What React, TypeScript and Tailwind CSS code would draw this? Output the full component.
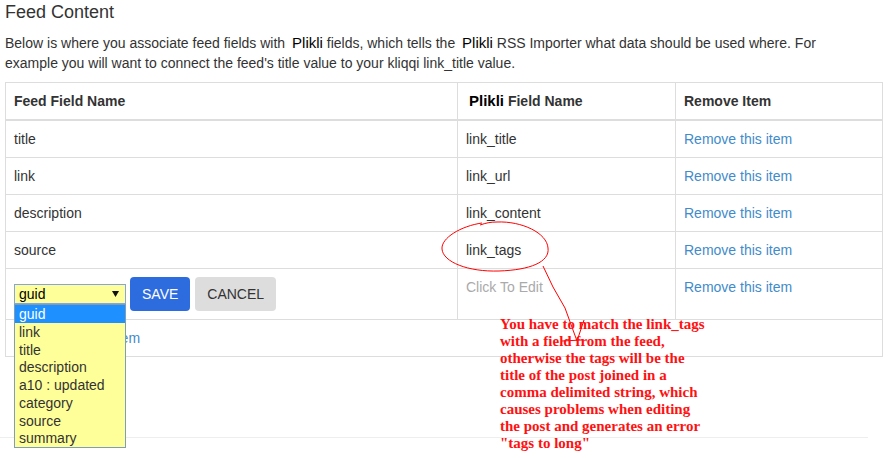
import React from 'react';

const rows = [
  { feed: 'title', field: 'link_title' },
  { feed: 'link', field: 'link_url' },
  { feed: 'description', field: 'link_content' },
  { feed: 'source', field: 'link_tags' },
];

const options = ['guid', 'link', 'title', 'description', 'a10 : updated', 'category', 'source', 'summary'];

const note = [
  'You have to match the link_tags',
  'with a field from the feed,',
  'otherwise the tags will be the',
  'title of the post joined in a',
  'comma delimited string, which',
  'causes problems when editing',
  'the post and generates an error',
  '"tags to long"',
];

function Brand({ bold }: { bold?: boolean }) {
  return (
    <span className={`ml-[3px] text-[15px] text-black ${bold ? 'font-bold' : ''}`}>Plikli</span>
  );
}

export default function App() {
  return (
    <div className="relative w-[889px] h-[458px] overflow-hidden bg-white font-['Liberation_Sans',Arial,sans-serif] text-[14px] leading-[20px] text-[#333]">
      <div className="pl-[5px] pt-[2px]">
        <h4 className="text-[18px] leading-[20px] font-normal mb-[11px]">Feed Content</h4>
        <p className="mb-[9px]">
          Below is where you associate feed fields with <Brand /> fields, which tells the <Brand /> RSS Importer what
          data should be used where. For
          <br />
          example you will want to connect the feed's title value to your kliqqi link_title value.
        </p>

        <table className="table-fixed border-collapse w-[877px] border border-[#ddd]">
          <colgroup>
            <col className="w-[452px]" />
            <col className="w-[218px]" />
            <col className="w-[207px]" />
          </colgroup>
          <thead>
            <tr>
              <th className="p-2 text-left align-bottom font-bold border border-[#ddd] border-b-2">Feed Field Name</th>
              <th className="p-2 text-left align-bottom font-bold border border-[#ddd] border-b-2">
                <Brand bold /> Field Name
              </th>
              <th className="p-2 text-left align-bottom font-bold border border-[#ddd] border-b-2">Remove Item</th>
            </tr>
          </thead>
          <tbody>
            {rows.map((r) => (
              <tr key={r.feed}>
                <td className="p-2 align-top border border-[#ddd]">{r.feed}</td>
                <td className="p-2 align-top border border-[#ddd]">{r.field}</td>
                <td className="p-2 align-top border border-[#ddd]">
                  <a className="text-[#428bca]">Remove this item</a>
                </td>
              </tr>
            ))}
            <tr>
              <td className="p-2 align-top border border-[#ddd]">
                <div className="flex items-center">
                  <div className="relative w-[112px] h-[20px]">
                    <div className="h-full flex items-center justify-between border border-[#86a5db] bg-[#ffff99] pl-[4px] pr-[6px] text-black">
                      <span>guid</span>
                      <svg width="7" height="6" viewBox="0 0 7 6">
                        <path d="M0 0 H7 L3.5 6 Z" fill="#111" />
                      </svg>
                    </div>
                    <ul className="absolute z-10 left-0 top-[20px] w-[112px] border border-[#7f9db9] bg-[#ffff99]">
                      {options.map((o, i) => (
                        <li
                          key={o}
                          className={`h-[17.75px] leading-[18px] pl-[4px] ${
                            i === 0 ? 'bg-[#1e90ff] text-white' : 'text-[#333]'
                          }`}
                        >
                          {o}
                        </li>
                      ))}
                    </ul>
                  </div>
                  <button className="ml-[4px] h-[34px] px-3 rounded-[4px] bg-[#2d6cdf] text-white">SAVE</button>
                  <button className="ml-[5px] h-[34px] px-3 rounded-[4px] bg-[#dddddd] text-[#333]">CANCEL</button>
                </div>
              </td>
              <td className="p-2 align-top border border-[#ddd] text-[#aaa]">Click To Edit</td>
              <td className="p-2 align-top border border-[#ddd]">
                <a className="text-[#428bca]">Remove this item</a>
              </td>
            </tr>
            <tr>
              <td colSpan={3} className="p-2 align-top border border-[#ddd]">
                <a className="text-[#428bca]">Add a new field item</a>
              </td>
            </tr>
          </tbody>
        </table>
      </div>
      <div className="mt-[80px] h-px w-[868px] bg-[#eee]" />

      {/* hand-drawn annotation */}
      <svg className="absolute inset-0 pointer-events-none" width="889" height="458" viewBox="0 0 889 458">
        <path
          d="M482 223 C461 226 441 238 442 249 C443 262 468 272 499 271 C530 270 550 262 548 248 C547 233 522 221 497 222 C490 222 486 223 480 225"
          fill="none"
          stroke="#ff0000"
          strokeWidth="1"
        />
        <path
          d="M543 266 L553 287 L565 308 L577 341 L584 320 M562 341 L582 340"
          fill="none"
          stroke="#ff0000"
          strokeWidth="1"
        />
      </svg>
      <div className="absolute left-[500px] top-[316px] font-['Liberation_Serif','Times_New_Roman',serif] font-bold text-[15px] leading-[17px] text-[#ff1111]">
        {note.map((l) => (
          <div key={l}>{l}</div>
        ))}
      </div>
    </div>
  );
}
